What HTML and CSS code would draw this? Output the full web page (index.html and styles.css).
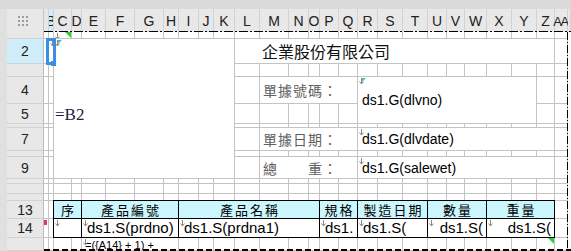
FILE: index.html
```html
<!DOCTYPE html>
<html lang="zh-Hant">
<head>
    <meta charset="UTF-8">
    <title>報表設計</title>
    <link rel="stylesheet" href="styles.css">
    <script>
        window.onload = function () {
            var sheet = document.getElementById('sheet');
            var tail = document.getElementById('tail');

            //列名
            var letters = ['A','B','C','D','E','F','G','H','I','J','K','L','M','N','O','P','Q','R','S','T','U','V','W','X','Y','Z','AA'];
            var rowCount = 15;
            //显示行号的行
            var rowLabels = {2: 1, 4: 1, 5: 1, 7: 1, 9: 1, 13: 1, 14: 1};

            var arrow = '<svg class="mk" width="5" height="7" viewBox="0 0 5 7"><path d="M2.5 0V6M0.5 3.5L2.5 6L4.5 3.5" fill="none" stroke="#8a8a8a"/></svg>';
            var teal = '<svg class="mk" width="8" height="7" viewBox="0 0 8 7"><path d="M2 0H7L2 5Z" fill="#3cc6b2"/><path d="M2.5 0V6M0.5 3.5L2.5 6L4.5 3.5" fill="none" stroke="#8a8a8a"/></svg>';

            //格子内容：位置, [行数, 列数]
            var cells = [
                {at: 'C1', mk: arrow, tri: 1},
                {at: 'B2', mk: arrow},
                {at: 'C2', span: [8, 9], cls: 'big', text: '=B2', mk: teal},
                {at: 'L2', span: [1, 15], cls: 'title', text: '企業股份有限公司'},
                {at: 'M4', span: [1, 5], cls: 'label', text: '單據號碼：'},
                {at: 'R4', span: [2, 8], cls: 'val', text: 'ds1.G(dlvno)', mk: teal},
                {at: 'M7', span: [1, 5], cls: 'label', text: '單據日期：'},
                {at: 'R7', span: [1, 9], cls: 'val', text: 'ds1.G(dlvdate)', mk: arrow},
                {at: 'M9', span: [1, 5], cls: 'label', text: '總　　重：'},
                {at: 'R9', span: [1, 9], cls: 'val', text: 'ds1.G(salewet)', mk: arrow},
                {at: 'C13', span: [1, 2], cls: 'th first', text: '序'},
                {at: 'E13', span: [1, 4], cls: 'th', text: '產品編號'},
                {at: 'I13', span: [1, 7], cls: 'th', text: '產品名稱'},
                {at: 'P13', span: [1, 2], cls: 'th', text: '規格'},
                {at: 'R13', span: [1, 3], cls: 'th', text: '製造日期'},
                {at: 'U13', span: [1, 3], cls: 'th', text: '數量'},
                {at: 'X13', span: [1, 3], cls: 'th', text: '重量'},
                {at: 'A14', cls: 'flag'},
                {at: 'C14', span: [1, 2], cls: 'td first', mk: arrow},
                {at: 'E14', span: [1, 4], cls: 'td', text: 'ds1.S(prdno)', mk: arrow},
                {at: 'I14', span: [1, 7], cls: 'td', text: 'ds1.S(prdna1)', mk: arrow},
                {at: 'P14', span: [1, 2], cls: 'td', text: 'ds1.', mk: arrow},
                {at: 'R14', span: [1, 3], cls: 'td', text: 'ds1.S(', mk: arrow},
                {at: 'U14', span: [1, 3], cls: 'td right', text: 'ds1.S(', mk: arrow},
                {at: 'X14', span: [1, 3], cls: 'td right', text: 'ds1.S(', mk: arrow},
                {at: 'E15', span: [1, 4], cls: 'note', text: '=({A14} + 1) +', mk: arrow},
                {at: 'Z15', tri: 1}
            ];

            function parse(at) {
                var m = at.match(/^([A-Z]+)(\d+)$/);
                return {c: letters.indexOf(m[1]), r: parseInt(m[2])};
            }

            //合并格占用的位置
            var starts = {};
            var covered = {};
            for (var i = 0; i < cells.length; i++) {
                var p = parse(cells[i].at);
                var sp = cells[i].span || [1, 1];
                starts[p.r + ':' + p.c] = cells[i];
                for (var y = 0; y < sp[0]; y++) {
                    for (var x = 0; x < sp[1]; x++) {
                        covered[(p.r + y) + ':' + (p.c + x)] = true;
                    }
                }
            }

            function add(cls, row, col, html) {
                var d = document.createElement('div');
                d.className = cls;
                d.style.gridRow = row;
                d.style.gridColumn = col;
                if (html) d.innerHTML = html;
                sheet.insertBefore(d, tail);
                return d;
            }

            //列头
            for (var c = 0; c < letters.length; c++) {
                var hc = 'colhead';
                if (letters[c] == 'B') hc += ' sel';
                if (letters[c].length > 1) hc += ' wide';
                add(hc, 2, c + 3, letters[c] == 'A' ? '' : '<span>' + letters[c] + '</span>');
            }
            add('colhead', 2, 30);

            //行头 + 格子
            for (var r = 1; r <= rowCount; r++) {
                add('rowhead' + (r == 2 ? ' sel' : ''), r + 2, 2, rowLabels[r] ? String(r) : '');
                for (var c = 0; c < letters.length; c++) {
                    var def = starts[r + ':' + c];
                    if (def) {
                        var sp = def.span || [1, 1];
                        var html = (def.mk || '') + (def.text ? '<span class="tx">' + def.text + '</span>' : '') + (def.tri ? '<i class="tri"></i>' : '');
                        add('cell ' + (def.cls || ''), (r + 2) + ' / span ' + sp[0], (c + 3) + ' / span ' + sp[1], html);
                    } else if (!covered[r + ':' + c]) {
                        add('cell', r + 2, c + 3);
                    }
                }
            }
        };
    </script>
</head>
<body>
    <div id="sheet" class="sheet">
        <div class="topbar"></div>
        <div class="gutter"></div>
        <div class="corner">
            <svg width="10" height="10" viewBox="0 0 10 10">
                <g fill="#9c9c9c">
                    <rect x="0" y="0" width="2" height="2"/><rect x="4" y="0" width="2" height="2"/><rect x="8" y="0" width="2" height="2"/>
                    <rect x="0" y="4" width="2" height="2"/><rect x="4" y="4" width="2" height="2"/><rect x="8" y="4" width="2" height="2"/>
                    <rect x="0" y="8" width="2" height="2"/><rect x="4" y="8" width="2" height="2"/><rect x="8" y="8" width="2" height="2"/>
                </g>
            </svg>
        </div>
        <div id="tail" class="pb-top"></div>
        <div class="pb-right"></div>
        <div class="pb-bottom"></div>
        <div class="selbox"></div>
    </div>
</body>
</html>
```

FILE: styles.css
```css
* {
    margin: 0;
    padding: 0;
    box-sizing: border-box;
}
body {
    font-family: "Liberation Sans", "Noto Sans CJK TC", sans-serif;
    background: #fff;
    overflow: hidden;
}
.sheet {
    display: grid;
    grid-template-columns: 7px 37px 5px 5px 18px 10px 24px 29px 29px 15px 20px 15px 21px 25px 29px 20px 11px 19px 19px 20px 25px 25px 19px 18px 22px 25px 25px 18px 13px 3px;
    grid-template-rows: 9px 23px 7px 25px 13px 27px 20px 4px 23px 6px 22px 5px 10px 7px 18px 19px 13px;
    width: 571px;
    height: 251px;
    overflow: hidden;
}

/* 外框 */
.topbar {
    grid-column: 1 / -1;
    grid-row: 1;
    background: #dadada;
}
.gutter {
    grid-column: 1;
    grid-row: 2 / -1;
    background: #e0e0e0;
}
.corner {
    grid-column: 2;
    grid-row: 2;
    background: #e8e8e8;
    border-right: 1px solid #c4c4c4;
    display: flex;
    align-items: center;
    justify-content: center;
    padding-right: 5px;
}
.colhead {
    background: #e8e8e8;
    border-right: 1px solid #d2d2d2;
    font-size: 14px;
    color: #222;
    display: flex;
    justify-content: center;
    align-items: center;
    padding-top: 1px;
    overflow: hidden;
    white-space: nowrap;
}
.colhead.sel { background: #cdeefa; }
.colhead.wide {
    overflow: visible;
    font-size: 13px;
    letter-spacing: -1.5px;
    padding-right: 1px;
}
.rowhead {
    background: #e8e8e8;
    border-bottom: 1px solid #d2d2d2;
    border-right: 1px solid #bcbcbc;
    font-size: 14px;
    color: #222;
    display: flex;
    align-items: center;
    justify-content: center;
    overflow: hidden;
}
.rowhead.sel { background: #cfeefa; }

/* 格子 */
.cell {
    border-right: 1px solid #c4c4c4;
    border-bottom: 1px solid #c4c4c4;
    position: relative;
    display: flex;
    align-items: center;
    white-space: nowrap;
    overflow: hidden;
}
.mk {
    position: absolute;
    left: 1px;
    top: 1px;
}
.tri {
    position: absolute;
    right: 0;
    top: 0;
    width: 0;
    height: 0;
    border-left: 6px solid transparent;
    border-top: 6px solid #2fcf3a;
}
.big {
    font-family: "Liberation Serif", serif;
    font-size: 17px;
    color: #1c2040;
    padding: 13px 0 0 1px;
}
.title {
    font-family: "Noto Sans CJK TC", sans-serif;
    font-size: 16px;
    color: #111;
    padding-left: 27px;
}
.label {
    font-family: "Noto Sans CJK TC", sans-serif;
    font-size: 14px;
    letter-spacing: 1px;
    color: #5f5f5f;
    padding-left: 3px;
}
.val {
    font-size: 14px;
    color: #000;
    padding-left: 4px;
}
.th {
    background: #ccf6fd;
    border-top: 1px solid #000;
    border-right: 1px solid #000;
    border-bottom: 1px solid #000;
    margin-top: -1px;
    justify-content: center;
    font-family: "Noto Sans CJK TC", sans-serif;
    font-size: 13px;
    letter-spacing: 2px;
    padding-left: 2px;
    color: #000;
}
.td {
    border-right: 1px solid #000;
    border-bottom: 1px solid #000;
    font-size: 15px;
    color: #000;
    padding-left: 5px;
    line-height: 18px;
}
.first {
    border-left: 1px solid #000;
    margin-left: -1px;
}
.right {
    justify-content: flex-end;
    padding-right: 3px;
}
.note {
    font-size: 11px;
    line-height: 13px;
    align-items: flex-start;
    padding: 1px 0 0 3px;
    color: #000;
}
.flag::before {
    content: "";
    position: absolute;
    left: 0;
    top: 1px;
    width: 3px;
    height: 5px;
    background: #e8336a;
}

/* 分页线 */
.pb-top {
    grid-row: 2;
    grid-column: 3 / -1;
    align-self: end;
    height: 1px;
    background: repeating-linear-gradient(90deg, #000 0 9px, transparent 9px 11px, #000 11px 13px, transparent 13px 15px);
    z-index: 2;
}
.pb-right {
    grid-row: 3 / -1;
    grid-column: 29;
    justify-self: end;
    width: 1px;
    background: repeating-linear-gradient(180deg, #000 0 8px, transparent 8px 10px, #000 10px 11px, transparent 11px 13px);
    z-index: 2;
}
.pb-bottom {
    grid-row: 17;
    grid-column: 3 / -1;
    align-self: end;
    height: 2px;
    background: repeating-linear-gradient(90deg, #000 0 6px, transparent 6px 9px);
    z-index: 2;
}

/* 选中框 */
.selbox {
    grid-row: 4;
    grid-column: 4;
    margin: -1px -2px -1px -3px;
    border: 3px solid #3a8ee6;
    position: relative;
    z-index: 3;
}
.selbox::after {
    content: "";
    position: absolute;
    left: 2px;
    top: 20px;
    width: 5px;
    height: 5px;
    background: #3a8ee6;
}
```
